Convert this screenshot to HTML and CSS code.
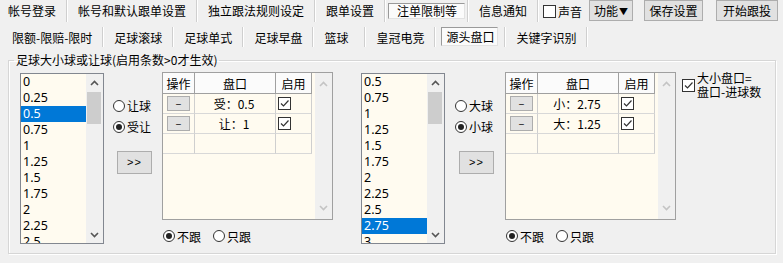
FILE: index.html
```html
<!DOCTYPE html>
<html lang="zh-CN">
<head>
<meta charset="utf-8">
<title>注单限制等</title>
<link rel="stylesheet" href="styles.css">
</head>
<body>
<div class="tabs main">
  <span class="tab t-first">帐号登录</span><i class="sep"></i>
  <span class="tab">帐号和默认跟单设置</span><i class="sep"></i>
  <span class="tab">独立跟法规则设定</span><i class="sep"></i>
  <span class="tab">跟单设置</span><i class="sep"></i>
  <span class="tab on">注单限制等</span><i class="sep"></i>
  <span class="tab">信息通知</span><i class="sep"></i>
  <span class="chk sound"><span class="box"></span>声音</span>
  <span class="btn b-func">功能<span class="tri">▼</span></span>
  <span class="btn b-save">保存设置</span>
  <span class="btn b-start">开始跟投</span>
</div>
<div class="tabs sub">
  <span class="tab t-first">限额-限赔-限时</span><i class="sep"></i>
  <span class="tab">足球滚球</span><i class="sep"></i>
  <span class="tab">足球单式</span><i class="sep"></i>
  <span class="tab">足球早盘</span><i class="sep"></i>
  <span class="tab t-wide">篮球</span><i class="sep"></i>
  <span class="tab">皇冠电竞</span><i class="sep"></i>
  <span class="tab on">源头盘口</span><i class="sep"></i>
  <span class="tab">关键字识别</span><i class="sep"></i>
</div>
<fieldset class="group">
  <legend>足球大小球或让球(启用条数&gt;0才生效)</legend>
  <div class="panel">
    <div class="list">
      <div class="items">
        <div class="item">0</div>
        <div class="item">0.25</div>
        <div class="item sel">0.5</div>
        <div class="item">0.75</div>
        <div class="item">1</div>
        <div class="item">1.25</div>
        <div class="item">1.5</div>
        <div class="item">1.75</div>
        <div class="item">2</div>
        <div class="item">2.25</div>
        <div class="item">2.5</div>
      </div>
      <div class="vscroll">
        <span class="arrow"><svg width="9" height="6" viewBox="0 0 9 6"><path d="M1 5 L4.5 1.5 L8 5" fill="none" stroke="#555" stroke-width="1.6"/></svg></span>
        <span class="thumb"></span>
        <span class="fill"></span>
        <span class="arrow"><svg width="9" height="6" viewBox="0 0 9 6"><path d="M1 1 L4.5 4.5 L8 1" fill="none" stroke="#555" stroke-width="1.6"/></svg></span>
      </div>
    </div>
    <div class="opts">
      <div class="radio"><span class="dot"></span>让球</div>
      <div class="radio"><span class="dot on"></span>受让</div>
      <span class="btn b-add">&gt;&gt;</span>
    </div>
    <div class="gridcol">
      <div class="grid">
        <div class="gtable">
          <div class="grow ghead"><span>操作</span><span>盘口</span><span>启用</span></div>
          <div class="grow"><span><i class="minus">–</i></span><span class="val">受：0.5</span><span class="ck"><span class="box on"><svg width="11" height="11" viewBox="0 0 11 11"><path d="M2 5.5 L4.5 8 L9.5 2.5" fill="none" stroke="#333" stroke-width="1.2"/></svg></span></span></div>
          <div class="grow"><span><i class="minus">–</i></span><span class="val">让：1</span><span class="ck"><span class="box on"><svg width="11" height="11" viewBox="0 0 11 11"><path d="M2 5.5 L4.5 8 L9.5 2.5" fill="none" stroke="#333" stroke-width="1.2"/></svg></span></span></div>
          <div class="grow"><span></span><span></span><span></span></div>
        </div>
        <div class="gscroll">
          <svg width="9" height="6" viewBox="0 0 9 6"><path d="M1 5 L4.5 1.5 L8 5" fill="none" stroke="#c4c4c4" stroke-width="1.6"/></svg>
          <svg width="9" height="6" viewBox="0 0 9 6"><path d="M1 1 L4.5 4.5 L8 1" fill="none" stroke="#c4c4c4" stroke-width="1.6"/></svg>
        </div>
      </div>
      <div class="follow">
        <div class="radio"><span class="dot on"></span>不跟</div>
        <div class="radio"><span class="dot"></span>只跟</div>
      </div>
    </div>

    <div class="list list-r">
      <div class="items">
        <div class="item">0.5</div>
        <div class="item">0.75</div>
        <div class="item">1</div>
        <div class="item">1.25</div>
        <div class="item">1.5</div>
        <div class="item">1.75</div>
        <div class="item">2</div>
        <div class="item">2.25</div>
        <div class="item">2.5</div>
        <div class="item sel">2.75</div>
        <div class="item">3</div>
      </div>
      <div class="vscroll">
        <span class="arrow"><svg width="9" height="6" viewBox="0 0 9 6"><path d="M1 5 L4.5 1.5 L8 5" fill="none" stroke="#555" stroke-width="1.6"/></svg></span>
        <span class="thumb"></span>
        <span class="fill"></span>
        <span class="arrow"><svg width="9" height="6" viewBox="0 0 9 6"><path d="M1 1 L4.5 4.5 L8 1" fill="none" stroke="#555" stroke-width="1.6"/></svg></span>
      </div>
    </div>
    <div class="opts opts-r">
      <div class="radio"><span class="dot"></span>大球</div>
      <div class="radio"><span class="dot on"></span>小球</div>
      <span class="btn b-add">&gt;&gt;</span>
    </div>
    <div class="gridcol">
      <div class="grid">
        <div class="gtable">
          <div class="grow ghead"><span>操作</span><span>盘口</span><span>启用</span></div>
          <div class="grow"><span><i class="minus">–</i></span><span class="val">小：2.75</span><span class="ck"><span class="box on"><svg width="11" height="11" viewBox="0 0 11 11"><path d="M2 5.5 L4.5 8 L9.5 2.5" fill="none" stroke="#333" stroke-width="1.2"/></svg></span></span></div>
          <div class="grow"><span><i class="minus">–</i></span><span class="val">大：1.25</span><span class="ck"><span class="box on"><svg width="11" height="11" viewBox="0 0 11 11"><path d="M2 5.5 L4.5 8 L9.5 2.5" fill="none" stroke="#333" stroke-width="1.2"/></svg></span></span></div>
          <div class="grow"><span></span><span></span><span></span></div>
        </div>
        <div class="gscroll">
          <svg width="9" height="6" viewBox="0 0 9 6"><path d="M1 5 L4.5 1.5 L8 5" fill="none" stroke="#c4c4c4" stroke-width="1.6"/></svg>
          <svg width="9" height="6" viewBox="0 0 9 6"><path d="M1 1 L4.5 4.5 L8 1" fill="none" stroke="#c4c4c4" stroke-width="1.6"/></svg>
        </div>
      </div>
      <div class="follow">
        <div class="radio"><span class="dot on"></span>不跟</div>
        <div class="radio"><span class="dot"></span>只跟</div>
      </div>
    </div>
    <div class="chk wide"><span class="box on"><svg width="11" height="11" viewBox="0 0 11 11"><path d="M2 5.5 L4.5 8 L9.5 2.5" fill="none" stroke="#333" stroke-width="1.2"/></svg></span><span class="two">大小盘口=<br>盘口-进球数</span></div>
  </div>
</fieldset>
</body>
</html>
```
FILE: styles.css
```css
html, body {
  margin: 0;
  padding: 0;
}
body {
  width: 783px;
  height: 263px;
  overflow: hidden;
  background: #f0f0f0;
  color: #000;
  font: 12px "Noto Sans CJK SC", "Noto Sans", sans-serif;
}

/* tab strips */
.tabs {
  display: flex;
  align-items: center;
  white-space: nowrap;
}
.main {
  height: 22px;
}
.sub {
  height: 24px;
  margin-top: 4px;
}
.tab {
  padding: 0 10px 0 11px;
  line-height: 22px;
}
.sub .tab {
  line-height: 24px;
}
.main .t-first {
  padding-left: 8px;
}
.sub .t-first {
  padding-left: 12px;
}
.sub .t-wide {
  padding-right: 16px;
}
.sep {
  display: block;
  width: 1px;
  align-self: stretch;
  background: #cfcfcf;
  box-shadow: 1px 0 0 #fff;
}
.sub .sep {
  margin: 1px 0 3px;
}
.tab.on {
  background: #fbfbfb;
  border: 1px solid;
  border-color: #9a9a9a #e2e2e2 #e2e2e2 #9a9a9a;
}
.main .tab.on {
  line-height: 14px;
  margin: 0 2px 0 3px;
  padding: 0 7px 0 8px;
}
.sub .tab.on {
  line-height: 17px;
  align-self: flex-start;
  margin: 1px 6px 0 6px;
  padding: 0 3px 0 4px;
}

/* checkbox & radio */
.chk {
  display: flex;
  align-items: center;
}
.box {
  display: inline-flex;
  align-items: center;
  justify-content: center;
  width: 13px;
  height: 13px;
  box-sizing: border-box;
  border: 1px solid #333;
  background: #fff;
}
.sound {
  margin-left: 5px;
}
.sound .box {
  margin-right: 2px;
}
.radio {
  display: flex;
  align-items: center;
  height: 21px;
  white-space: nowrap;
}
.dot {
  position: relative;
  width: 12px;
  height: 12px;
  box-sizing: border-box;
  border: 1px solid #333;
  border-radius: 50%;
  background: #fff;
  margin-right: 2px;
}
.dot.on::after {
  content: "";
  position: absolute;
  left: 2px;
  top: 2px;
  width: 6px;
  height: 6px;
  border-radius: 50%;
  background: #222;
}

/* buttons */
.btn {
  display: block;
  box-sizing: border-box;
  height: 21px;
  line-height: 19px;
  text-align: center;
  background: #e1e1e1;
  border: 1px solid #adadad;
  white-space: nowrap;
}
.main .btn {
  align-self: flex-start;
}
.b-func {
  width: 44px;
  margin-left: 7px;
}
.tri {
  font-size: 9px;
  vertical-align: 1px;
  margin-left: 1px;
}
.b-save {
  width: 59px;
  margin-left: 11px;
}
.b-start {
  width: 62px;
  margin-left: 13px;
}
.b-add {
  width: 35px;
  height: 23px;
  line-height: 21px;
  margin: 14px 0 0 4px;
  font-family: "Liberation Sans", sans-serif;
  font-size: 11px;
  letter-spacing: 1px;
}

/* group box */
.group {
  box-sizing: border-box;
  width: 768px;
  height: 202px;
  margin: 2px 0 0 8px;
  padding: 0;
  border: 1px solid #d6d6d6;
  box-shadow: inset 1px 1px 0 #fff, 1px 1px 0 #fff;
}
.group legend {
  margin-left: 5px;
  padding: 0 2px;
  line-height: 16px;
}
.panel {
  display: flex;
  align-items: flex-start;
  padding: 5px 0 0 11px;
}

/* list boxes */
.list {
  display: flex;
  box-sizing: border-box;
  width: 84px;
  height: 171px;
  border: 1px solid #828790;
  background: #fffbf0;
  overflow: hidden;
}
.list-r {
  margin-left: 28px;
}
.items {
  flex: 1;
}
.item {
  height: 16px;
  line-height: 16px;
  padding-left: 2px;
  font-family: "Noto Sans", sans-serif;
  font-size: 12.5px;
}
.item.sel {
  background: #0078d7;
  color: #fff;
}
.vscroll {
  display: flex;
  flex-direction: column;
  width: 17px;
  background: #f0f0f0;
}
.arrow {
  display: flex;
  align-items: center;
  justify-content: center;
  height: 17px;
}
.thumb {
  height: 32px;
  margin: 1px 2px 0 1px;
  background: #cdcdcd;
}
.fill {
  flex: 1;
}

/* radio column */
.opts {
  display: flex;
  flex-direction: column;
  width: 40px;
  margin-left: 9px;
  padding-top: 22px;
}
.opts-r {
  margin-left: 10px;
}

/* grid */
.gridcol {
  margin: -1px 0 0 9px;
}
.opts-r + .gridcol {
  margin-left: 10px;
}
.grid {
  display: flex;
  box-sizing: border-box;
  width: 171px;
  height: 148px;
  border: 1px solid #a0a0a0;
  background: #fffbf0;
}
.gtable {
  width: 153px;
}
.grow {
  display: grid;
  grid-template-columns: 32px 81px 36px;
  height: 20px;
}
.grow > span {
  display: flex;
  align-items: center;
  justify-content: center;
  box-sizing: border-box;
  border-right: 1px solid #cfcfcf;
  border-bottom: 1px solid #d8d8d8;
}
.grow.ghead {
  height: 21px;
}
.ghead > span {
  background: #fbfbfb;
  border-right-color: #a0a0a0;
  border-bottom-color: #a0a0a0;
}
.grow > span.ck {
  justify-content: flex-start;
  padding-left: 2px;
}
.val {
  padding-right: 2px;
}
.minus {
  display: block;
  box-sizing: border-box;
  width: 23px;
  height: 15px;
  line-height: 12px;
  text-align: center;
  font-style: normal;
  font-size: 11px;
  background: #e1e1e1;
  border: 1px solid #adadad;
}
.gscroll {
  display: flex;
  flex-direction: column;
  justify-content: space-between;
  align-items: center;
  width: 17px;
  box-sizing: border-box;
  padding: 8px 0 8px;
  background: #f0f0f0;
}
.follow {
  display: flex;
  height: 16px;
  margin-top: 8px;
  padding-left: 1px;
}
.follow .radio {
  height: 16px;
  margin-right: 12px;
}

/* wide checkbox */
.wide {
  margin: -2px 0 0 6px;
}
.wide .box {
  margin-right: 2px;
}
.two {
  line-height: 14px;
}
```
